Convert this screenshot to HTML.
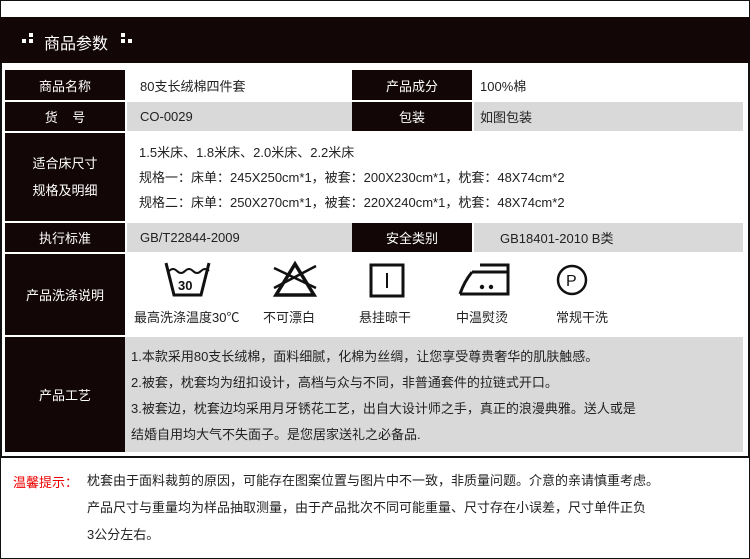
<!DOCTYPE html>
<html><head><meta charset="utf-8"><style>
*{margin:0;padding:0;box-sizing:border-box}
body{width:750px;height:559px;background:#fff;font-family:"Liberation Sans","Noto Sans CJK SC",sans-serif;position:relative;overflow:hidden;color:#222}
.a{position:absolute}
.k{background:#120606;color:#fff;font-size:13px;display:flex;align-items:center;justify-content:center}
.g{background:#d9d9d9}
.v{font-size:13px;display:flex;align-items:center;padding-left:13px}
.t{font-size:13px}
</style></head><body>
<div class="a" style="left:0;top:0;width:750px;height:559px;border:1px solid #111"></div>
<div class="a" style="left:0;top:17px;width:750px;height:46px;background:#120606;color:#fff;font-size:16px;">
<span class="a" style="left:22px;top:22px;width:4px;height:4px;background:#fff"></span>
<span class="a" style="left:29px;top:16px;width:4px;height:4px;background:#fff"></span>
<span class="a" style="left:29px;top:22px;width:4px;height:4px;background:#fff"></span>
<span class="a" style="left:44px;top:13px">商品参数</span>
<span class="a" style="left:121px;top:16px;width:4px;height:4px;background:#fff"></span>
<span class="a" style="left:121px;top:22px;width:4px;height:4px;background:#fff"></span>
<span class="a" style="left:128px;top:22px;width:4px;height:4px;background:#fff"></span>
</div>
<div class="a" style="left:0;top:63px;width:2px;height:394px;background:#111"></div>
<div class="a" style="left:748px;top:63px;width:2px;height:394px;background:#111"></div>
<div class="a" style="left:0;top:456px;width:750px;height:2px;background:#111"></div>

<div class="a k" style="left:5px;top:70px;width:120px;height:30px">商品名称</div>
<div class="a v" style="left:127px;top:70px;width:225px;height:30px">80支长绒棉四件套</div>
<div class="a k" style="left:352px;top:70px;width:120px;height:30px">产品成分</div>
<div class="a v" style="left:474px;top:70px;width:269px;height:30px;padding-left:6px">100%棉</div>

<div class="a k" style="left:5px;top:102px;width:120px;height:29px">货&nbsp;&nbsp;&nbsp;&nbsp;号</div>
<div class="a v g" style="left:127px;top:102px;width:225px;height:29px">CO-0029</div>
<div class="a k" style="left:352px;top:102px;width:120px;height:29px">包装</div>
<div class="a v g" style="left:474px;top:102px;width:269px;height:29px;padding-left:6px">如图包装</div>

<div class="a k" style="left:5px;top:133px;width:120px;height:88px;flex-direction:column;line-height:27px">适合床尺寸<br>规格及明细</div>
<div class="a t" style="left:139px;top:140px;line-height:25px">1.5米床、1.8米床、2.0米床、2.2米床<br>规格一：床单：245X250cm*1，被套：200X230cm*1，枕套：48X74cm*2<br>规格二：床单：250X270cm*1，被套：220X240cm*1，枕套：48X74cm*2</div>

<div class="a k" style="left:5px;top:223px;width:120px;height:29px">执行标准</div>
<div class="a v g" style="left:127px;top:223px;width:225px;height:29px">GB/T22844-2009</div>
<div class="a k" style="left:352px;top:223px;width:120px;height:29px">安全类别</div>
<div class="a v g" style="left:474px;top:223px;width:269px;height:29px;padding-left:26px">GB18401-2010 B类</div>

<div class="a k" style="left:5px;top:254px;width:120px;height:81px">产品洗涤说明</div>
<svg class="a" style="left:120px;top:258px" width="520" height="45" viewBox="0 0 520 45" fill="none" stroke="#111" stroke-width="3">
<path d="M46 5 L54 37 H81 L89 5"/><path d="M49 13 q4 -4 8 0 q4 4 8 0 q4 -4 8 0 q4 4 8 0 q4 -4 8 0" stroke-width="2"/>
<rect x="57" y="18" width="21" height="16" fill="#fff" stroke="none"/>
<text x="58" y="32" font-size="13" font-weight="bold" fill="#111" stroke="none" font-family="Liberation Sans">30</text>
<path d="M175 6 L156 37 H194 Z" stroke-width="3.5"/><path d="M154 10 L196 30 M196 8 L154 30" stroke-width="2.5"/>
<rect x="251" y="7" width="32" height="31" stroke-width="3"/><path d="M267 15 V30" stroke-width="2"/>
<path d="M340 36 H388 V7 H360 M352 14 H388 M352 14 Q344 24 340 36"/><circle cx="362" cy="29" r="2.2" fill="#111" stroke="none"/><circle cx="371" cy="29" r="2.2" fill="#111" stroke="none"/>
<circle cx="452" cy="22" r="14" stroke-width="2.5"/><text x="446" y="28" font-size="16" fill="#111" stroke="none" font-family="Liberation Sans">P</text>
</svg>
<div class="a t" style="left:134px;top:307px">最高洗涤温度30℃</div>
<div class="a t" style="left:263px;top:307px">不可漂白</div>
<div class="a t" style="left:359px;top:307px">悬挂晾干</div>
<div class="a t" style="left:456px;top:307px">中温熨烫</div>
<div class="a t" style="left:556px;top:307px">常规干洗</div>

<div class="a k" style="left:5px;top:337px;width:120px;height:115px">产品工艺</div>
<div class="a g" style="left:125px;top:337px;width:618px;height:115px"></div>
<div class="a t" style="left:131px;top:344px;line-height:26px">1.本款采用80支长绒棉，面料细腻，化棉为丝绸，让您享受尊贵奢华的肌肤触感。<br>2.被套，枕套均为纽扣设计，高档与众与不同，非普通套件的拉链式开口。<br>3.被套边，枕套边均采用月牙锈花工艺，出自大设计师之手，真正的浪漫典雅。送人或是<br>结婚自用均大气不失面子。是您居家送礼之必备品.</div>

<div class="a t" style="left:13px;top:472px;color:#e00">温馨提示：</div>
<div class="a t" style="left:87px;top:467px;line-height:27px">枕套由于面料裁剪的原因，可能存在图案位置与图片中不一致，非质量问题。介意的亲请慎重考虑。<br>产品尺寸与重量均为样品抽取测量，由于产品批次不同可能重量、尺寸存在小误差，尺寸单件正负<br>3公分左右。</div>
</body></html>
